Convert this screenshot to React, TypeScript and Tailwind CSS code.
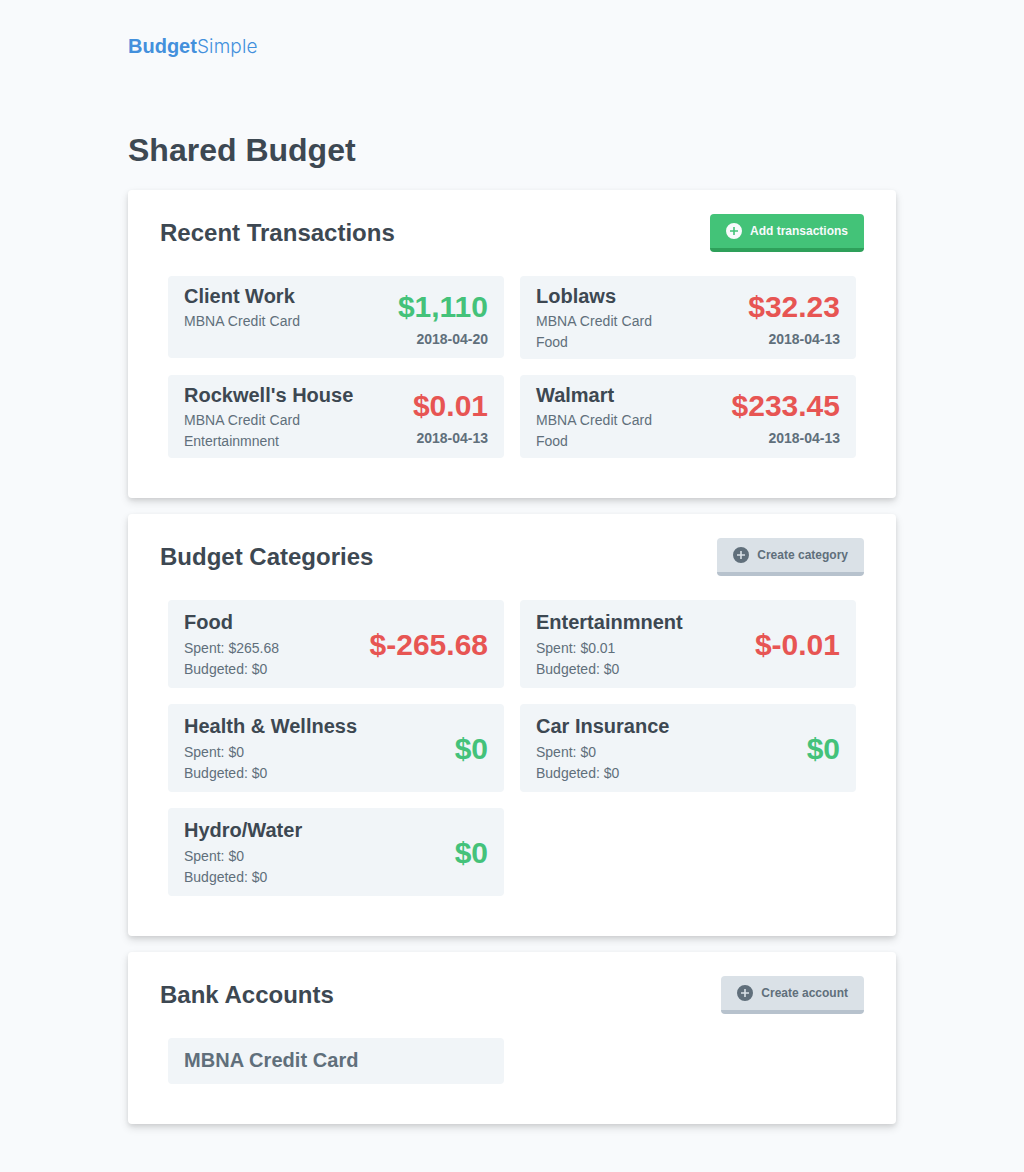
import type { ReactNode } from "react";

type Tone = "green" | "red";

const amountTone: Record<Tone, string> = {
  green: "text-[#44c27a]",
  red: "text-[#e75553]",
};

const transactions: {
  name: string;
  account: string;
  category?: string;
  amount: string;
  tone: Tone;
  date: string;
}[] = [
  { name: "Client Work", account: "MBNA Credit Card", amount: "$1,110", tone: "green", date: "2018-04-20" },
  { name: "Loblaws", account: "MBNA Credit Card", category: "Food", amount: "$32.23", tone: "red", date: "2018-04-13" },
  { name: "Rockwell's House", account: "MBNA Credit Card", category: "Entertainmnent", amount: "$0.01", tone: "red", date: "2018-04-13" },
  { name: "Walmart", account: "MBNA Credit Card", category: "Food", amount: "$233.45", tone: "red", date: "2018-04-13" },
];

const categories: { name: string; spent: string; budgeted: string; left: string; tone: Tone }[] = [
  { name: "Food", spent: "$265.68", budgeted: "$0", left: "$-265.68", tone: "red" },
  { name: "Entertainmnent", spent: "$0.01", budgeted: "$0", left: "$-0.01", tone: "red" },
  { name: "Health & Wellness", spent: "$0", budgeted: "$0", left: "$0", tone: "green" },
  { name: "Car Insurance", spent: "$0", budgeted: "$0", left: "$0", tone: "green" },
  { name: "Hydro/Water", spent: "$0", budgeted: "$0", left: "$0", tone: "green" },
];

function PlusCircle() {
  return (
    <svg viewBox="0 0 20 20" className="size-4 fill-current" aria-hidden="true">
      <path d="M11 9V5H9v4H5v2h4v4h2v-4h4V9h-4zm-1 11a10 10 0 1 1 0-20 10 10 0 0 1 0 20z" />
    </svg>
  );
}

function ActionButton({ label, primary = false }: { label: string; primary?: boolean }) {
  return (
    <button
      className={`flex h-[38px] items-center gap-2 rounded border-b-4 px-4 text-xs font-bold ${
        primary
          ? "border-[#2ea05a] bg-[#43c378] text-[#f8fafc]"
          : "border-[#b7c2cd] bg-[#dae1e7] text-[#606f7b]"
      }`}
    >
      <PlusCircle />
      {label}
    </button>
  );
}

function Section({ title, action, children }: { title: string; action: ReactNode; children: ReactNode }) {
  return (
    <section className="mb-4 rounded bg-white px-8 pt-6 pb-10 shadow-[0_4px_8px_0_rgba(0,0,0,0.12),0_2px_4px_0_rgba(0,0,0,0.08)]">
      <header className="mb-6 flex items-center justify-between">
        <h2 className="text-2xl leading-9 font-bold">{title}</h2>
        {action}
      </header>
      <div className="grid grid-cols-2 items-start gap-4 px-2">{children}</div>
    </section>
  );
}

export default function App() {
  return (
    <div className="min-h-screen bg-[#f8fafc] px-32 pt-[31px] pb-8 font-['Liberation_Sans',Arial,sans-serif] text-[#3d4852]">
      <div className="flex h-[31px] items-baseline text-xl leading-[30px] text-[#4390dc]">
        <span className="font-bold">Budget</span>
        <span className="font-['Inter',sans-serif] text-[19px] font-light tracking-[0.15px]">Simple</span>
      </div>

      <h1 className="mt-16 mb-4 text-[32px] leading-[48px] font-bold">Shared Budget</h1>

      <Section title="Recent Transactions" action={<ActionButton label="Add transactions" primary />}>
        {transactions.map((t) => (
          <article key={t.name} className="flex min-h-[82px] justify-between rounded bg-[#f1f5f8] px-4">
            <div className="pt-[5px] pb-[6px] text-sm leading-[21px] text-[#606f7b]">
              <h3 className="text-xl leading-[30px] font-bold text-[#3d4852]">{t.name}</h3>
              <p className="tracking-[0.06px]">{t.account}</p>
              {t.category && <p>{t.category}</p>}
            </div>
            <div className="pt-2 text-right">
              <p className={`text-[30px] leading-[45px] font-bold ${amountTone[t.tone]}`}>{t.amount}</p>
              <p className="text-sm leading-[21px] font-bold text-[#606f7b]">{t.date}</p>
            </div>
          </article>
        ))}
      </Section>

      <Section title="Budget Categories" action={<ActionButton label="Create category" />}>
        {categories.map((c) => (
          <article key={c.name} className="flex h-[88px] items-center justify-between rounded bg-[#f1f5f8] px-4">
            <div className="pb-0.5 text-sm leading-[21px] text-[#606f7b]">
              <h3 className="mb-px text-xl leading-[30px] font-bold text-[#3d4852]">{c.name}</h3>
              <p>Spent: {c.spent}</p>
              <p>Budgeted: {c.budgeted}</p>
            </div>
            <p className={`text-[30px] leading-[45px] font-bold ${amountTone[c.tone]}`}>{c.left}</p>
          </article>
        ))}
      </Section>

      <Section title="Bank Accounts" action={<ActionButton label="Create account" />}>
        <article className="rounded bg-[#f1f5f8] px-4 pt-[7px] pb-[9px]">
          <h3 className="text-xl leading-[30px] font-bold tracking-[0.05px] text-[#606f7b]">MBNA Credit Card</h3>
        </article>
      </Section>
    </div>
  );
}
